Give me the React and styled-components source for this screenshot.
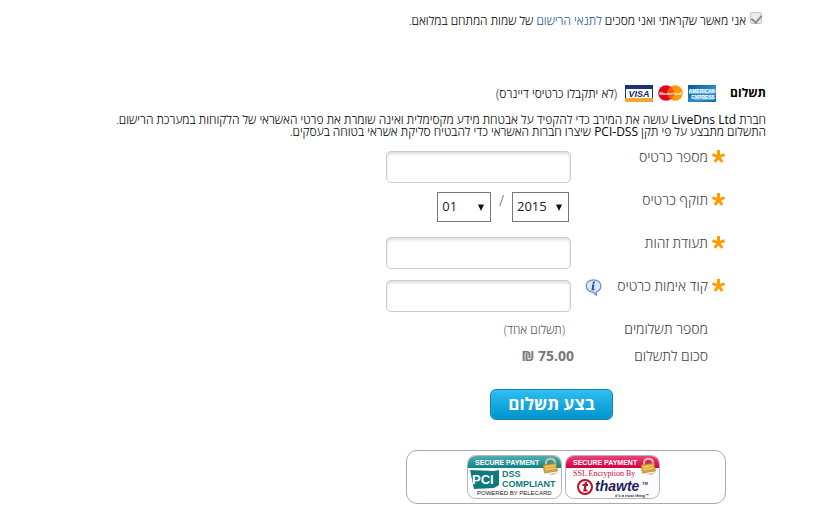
import React, {useState} from 'react';
import styled, {createGlobalStyle} from 'styled-components';

const GlobalStyle = createGlobalStyle`
    * {
        box-sizing: border-box;
    }
    body {
        margin: 0;
        background: #fff;
        color: #000;
        font-family: "Open Sans", "Noto Sans", sans-serif;
        font-size: 12px;
        font-weight: 300;
    }
`;

const Page = styled.main`
    direction: rtl;
    padding: 12px 62px 12px 12px;
`;

const Terms = styled.label`
    display: flex;
    align-items: center;
    gap: 4px;
    height: 16px;
    padding-right: 4px;
    margin-bottom: 56px;
`;

const TermsCheck = styled.input`
    appearance: none;
    display: flex;
    justify-content: center;
    align-items: flex-start;
    width: 12px;
    height: 12px;
    margin: 0 0 4px;
    border: 1px solid #c4c4c4;
    border-radius: 2px;
    background: #ededed;

    &:checked::before {
        content: "";
        width: 5px;
        height: 8px;
        border: solid #8c8c8c;
        border-width: 0 2px 2px 0;
        transform: rotate(40deg);
    }
`;

const TermsLink = styled.a`
    color: #1a5a94;
    text-decoration: none;
`;

const PaymentHeader = styled.header`
    display: flex;
    align-items: center;
    height: 18px;
    margin-bottom: 12px;
`;

const Title = styled.h2`
    margin: 0 0 0 14px;
    color: #000;
    font-size: 12px;
    font-weight: 700;
    line-height: 18px;
`;

const Cards = styled.div`
    display: flex;
    align-items: center;
    gap: 5px;
    margin-left: 8px;
`;

const Intro = styled.p`
    margin: 0 0 12px;
    line-height: 12px;
`;

const Latin = styled.span`
    font-weight: 400;
`;

const Form = styled.form`
    padding-right: 41px;
`;

const Row = styled.div`
    display: grid;
    grid-template-columns: 17px 106px 31px 1fr;
    align-items: start;
    height: ${props => (props.$compact ? 27 : 43)}px;
    color: #444;
`;

const Label = styled.label`
    grid-column: 2;
    font-size: 14px;
    line-height: 14px;
`;

const Star = styled.svg`
    width: 13px;
    height: 13px;
`;

const Hint = styled.button`
    width: 17px;
    height: 17px;
    padding: 0;
    border: 0;
    background: none;
`;

const Field = styled.div`
    grid-column: 4;
    display: flex;
    gap: 8px;
`;

const TextBox = styled.input`
    width: 185px;
    height: 32px;
    margin-top: 1px;
    padding: 4px 8px;
    border: 1px solid #ccc;
    border-radius: 5px;
    box-shadow: inset 0 2px 3px #ddd;
    background: #fff;
    font: inherit;
    outline: none;
`;

const Expiry = styled(Field)`
    margin-top: -1px;
    padding-right: 2px;
    font-size: 14px;
    line-height: 18px;
`;

const SelectBox = styled.span`
    display: grid;
    direction: ltr;
    align-items: center;
    width: ${props => (props.$wide ? 57 : 54)}px;
    height: 30px;

    select, svg {
        grid-area: 1 / 1;
    }
    svg {
        justify-self: end;
        margin-right: 6px;
        pointer-events: none;
    }
`;

const Select = styled.select`
    appearance: none;
    width: 100%;
    height: 30px;
    padding: 0 4px 2px;
    border: 1px solid #777;
    border-radius: 0;
    background: #fff;
    color: #222;
    font-family: inherit;
    font-size: 13px;
    font-weight: 400;
`;

const Note = styled.span`
    padding-right: 6px;
    color: #555;
    font-size: 12px;
    line-height: 16px;
`;

const Amount = styled.strong`
    grid-column: 4;
    margin-right: -3px;
    color: #777;
    font-size: 14px;
    font-weight: 700;
    line-height: 14px;
`;

const Submit = styled.button`
    display: block;
    width: 123px;
    height: 31px;
    margin: 13px 112px 30px 0;
    padding: 0 0 2px;
    border: 1px solid #0b86b5;
    border-radius: 6px;
    box-shadow: inset 0 0 1px #7fd6f5;
    background: linear-gradient(#2fbef3, #0093cd);
    color: #fff;
    font-family: inherit;
    font-size: 17px;
    font-weight: 700;
    line-height: 26px;
`;

const Seals = styled.footer`
    display: flex;
    justify-content: center;
    align-items: center;
    gap: 3px;
    direction: ltr;
    width: 320px;
    height: 54px;
    margin-right: 40px;
    padding-right: 6px;
    border: 1px solid #aaa;
    border-radius: 11px;
`;

const RequiredMark = () => (
    <Star viewBox="0 0 13 13" aria-hidden="true">
        <path
            d="M6.500 6.800V0M6.500 6.800L.4 4.600M6.500 6.800L12.600 4.600M6.500 6.800L2.800 12M6.500 6.800L10.200 12"
            fill="none"
            stroke="#ff9c00"
            strokeWidth="3"/>
    </Star>
);

const Amex = () => (
    <svg width="28" height="17" viewBox="0 0 28 17" fontFamily="Liberation Sans, sans-serif" direction="ltr">
        <defs>
            <linearGradient id="amex" x2="1" y2="1">
                <stop offset="0" stopColor="#07569b"/>
                <stop offset=".6" stopColor="#2c8fcb"/>
                <stop offset="1" stopColor="#0d6aac"/>
            </linearGradient>
        </defs>
        <path d="M0 0h28v17H0z" fill="url(#amex)"/>
        <path d="M1 4h25v5H1zM6 10h20v5H6z" fill="#5fb0dc"/>
        <g fill="#fff" fontSize="5" fontWeight="700" textAnchor="middle">
            <text x="14" y="8">AMERICAN</text>
            <text x="15" y="14">EXPRESS</text>
        </g>
    </svg>
);

const MasterCard = () => (
    <svg width="25" height="16" viewBox="0 0 25 16" fontFamily="Liberation Sans, sans-serif" direction="ltr">
        <circle cx="17" cy="8" r="7.800" fill="#ff9a00"/>
        <circle cx="8" cy="8" r="7.800" fill="#e3051b"/>
        <path d="M12.500 1.700a7.800 7.800 0 0 1 0 12.600 7.800 7.800 0 0 1 0-12.600" fill="#f05a0c"/>
        <text x="12.500" y="10" fill="#fff" fontSize="4" fontWeight="700" textAnchor="middle">MasterCard</text>
    </svg>
);

const Visa = () => (
    <svg width="28" height="17" viewBox="0 0 28 17" fontFamily="Liberation Sans, sans-serif" direction="ltr">
        <path d="M.5 .5h27v16H.5z" fill="#fff" stroke="#1a3473"/>
        <path d="M0 0h28v4H0z" fill="#1a3473"/>
        <path d="M0 13h28v4H0z" fill="#f2a63a"/>
        <text
            x="14"
            y="12"
            fill="#14286b"
            fontSize="9"
            fontWeight="700"
            fontStyle="italic"
            textAnchor="middle">VISA</text>
    </svg>
);

const InfoIcon = () => (
    <svg width="17" height="17" viewBox="0 0 17 17">
        <path
            d="M8.500 .8C4.400 .8 1.200 3.500 1.200 7c0 3.400 3 5.900 6.500 6.200l3.800 2.900-.4-3.300c3-.8 4.800-3 4.800-5.800C15.900 3.500 12.600 .8 8.500 .8z"
            fill="#dce9f8"
            stroke="#6f91c0"
            strokeWidth="1.300"/>
        <path d="M10 2.500L9.600 4.700H7.600L8 2.500zM7 5.600h2.500l-.8 4.400h1.100l-.2 1.300H6.400L7.200 6.900H6.800z" fill="#1d55b3"/>
    </svg>
);

const Arrow = () => (
    <svg width="8" height="7" viewBox="0 0 8 7" aria-hidden="true">
        <path d="M1 .5h6L4 7z" fill="#111"/>
    </svg>
);

const SealFrame = ({id, light, dark, children}) => (
    <svg width="95" height="44" viewBox="0 0 95 44" fontFamily="Liberation Sans, sans-serif">
        <defs>
            <linearGradient id={id} x2="0" y2="1">
                <stop offset="0" stopColor={light}/>
                <stop offset="1" stopColor={dark}/>
            </linearGradient>
        </defs>
        <rect x=".5" y=".5" width="94" height="43" rx="8" fill="#fdfdfd" stroke="#b5b5b5"/>
        <path d="M1 13V9a8 8 0 0 1 8-8h77a8 8 0 0 1 8 8v4z" fill={`url(#${id})`}/>
        <text x="8" y="10" fill="#fff" fontSize="7" fontWeight="700">SECURE PAYMENT</text>
        {children}
        <path d="M75 18l8 1 9-2-6 3z" fill="#b9bec4"/>
        <path d="M79 11V8c0-5 8-6 9-1l.5 3" fill="none" stroke="#c9c2a5" strokeWidth="2"/>
        <path d="M76 10l13-2 1.500 8-13 2z" fill="#d9a83c" stroke="#a57a23" strokeWidth=".6"/>
        <path d="M78 12l10-1.500M78.500 14.500l10-1.500" stroke="#f4d888"/>
    </svg>
);

const PciSeal = () => (
    <SealFrame id="pci" light="#53aeb0" dark="#0d8288">
        <path d="M3 15l24 1 5-1v15l-5 3-20 1z" fill="#11797d"/>
        <text x="5" y="29" fill="#fff" fontSize="13" fontWeight="700">PCI</text>
        <g
            fill="#11797d"
            fontFamily="Liberation Sans Narrow, Liberation Sans, sans-serif"
            fontSize="9"
            fontWeight="700">
            <text x="35" y="22">DSS</text>
            <text x="35" y="32">COMPLIANT</text>
        </g>
        <text x="10" y="40" fill="#222" fontSize="6">POWERED BY PELECARD</text>
    </SealFrame>
);

const ThawteSeal = () => (
    <SealFrame id="thawte" light="#f0407a" dark="#d3003f">
        <text x="8" y="21" fill="#c3103f" fontSize="8" fontFamily="Liberation Serif, serif">SSL Encryption By</text>
        <circle cx="20" cy="32" r="7" fill="#fff" stroke="#b5122d" strokeWidth="2"/>
        <path d="M21 27l-1.500 8.500h3M17.500 30h5.500" fill="none" stroke="#b5122d" strokeWidth="2.200"/>
        <g fill="#1d1d5c" fontWeight="700" fontStyle="italic">
            <text x="30" y="36" fontSize="14">thawte</text>
            <text x="77" y="30" fontSize="4">TM</text>
            <text x="50" y="42" fontSize="4">it's a trust thing™</text>
        </g>
    </SealFrame>
);

const months = ['01', '02', '03', '04', '05', '06', '07', '08', '09', '10', '11', '12'];
const years = ['2015', '2016', '2017', '2018', '2019', '2020'];

const DateSelect = ({id, label, options, wide}) => {
    const [value, setValue] = useState(options[0]);

    return (
        <SelectBox $wide={wide}>
            <Select id={id} aria-label={label} value={value} onChange={e => setValue(e.target.value)}>
                {options.map(option => <option key={option}>{option}</option>)}
            </Select>
            <Arrow/>
        </SelectBox>
    );
};

const TextRow = ({id, label, children}) => (
    <Row>
        <RequiredMark/>
        <Label htmlFor={id}>{label}</Label>
        {children}
        <Field>
            <TextBox id={id} type="text"/>
        </Field>
    </Row>
);

const App = () => (
    <Page>
        <GlobalStyle/>
        <Terms>
            <TermsCheck type="checkbox" defaultChecked disabled/>
            <span>
                אני מאשר שקראתי ואני מסכים <TermsLink href="#terms">לתנאי הרישום</TermsLink> של שמות המתחם במלואם.
            </span>
        </Terms>

        <PaymentHeader>
            <Title>תשלום</Title>
            <Cards>
                <Amex/>
                <MasterCard/>
                <Visa/>
            </Cards>
            <span>(לא יתקבלו כרטיסי דיינרס)</span>
        </PaymentHeader>
        <Intro>
            חברת <Latin>LiveDns Ltd</Latin> עושה את המירב כדי להקפיד על אבטחת מידע מקסימלית ואינה שומרת את פרטי האשראי של הלקוחות במערכת הרישום.
            <br/>
            התשלום מתבצע על פי תקן <Latin>PCI-DSS</Latin> שיצרו חברות האשראי כדי להבטיח סליקת אשראי בטוחה בעסקים.
        </Intro>

        <Form onSubmit={e => e.preventDefault()}>
            <TextRow id="card" label="מספר כרטיס"/>
            <Row>
                <RequiredMark/>
                <Label htmlFor="year">תוקף כרטיס</Label>
                <Expiry>
                    <DateSelect id="year" label="שנה" options={years} wide/>
                    <span>/</span>
                    <DateSelect id="month" label="חודש" options={months}/>
                </Expiry>
            </Row>
            <TextRow id="identity" label="תעודת זהות"/>
            <TextRow id="cvv" label="קוד אימות כרטיס">
                <Hint type="button" aria-label="מידע">
                    <InfoIcon/>
                </Hint>
            </TextRow>
            <Row $compact>
                <Label as="span">מספר תשלומים</Label>
                <Field>
                    <Note>(תשלום אחד)</Note>
                </Field>
            </Row>
            <Row $compact>
                <Label as="span">סכום לתשלום</Label>
                <Amount>75.00 ₪</Amount>
            </Row>
            <Submit type="submit">בצע תשלום</Submit>
        </Form>

        <Seals>
            <PciSeal/>
            <ThawteSeal/>
        </Seals>
    </Page>
);

export default App;
